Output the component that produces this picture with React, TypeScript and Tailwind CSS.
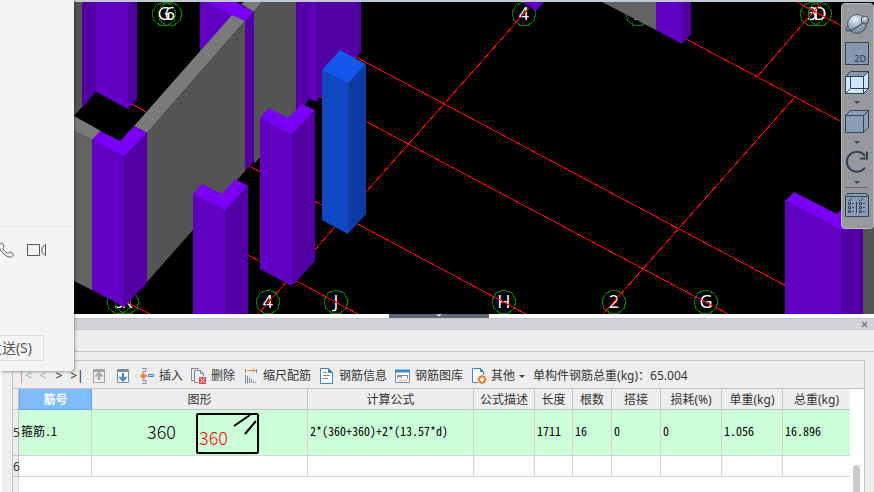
import type { ReactNode } from "react";

type Point = [number, number];

// [fill, points]
const BACK_FACES: [string, string][] = [
  ["#545454", "74,2 82,2 82,107 74,116"],
  ["#5200a3", "82,2 96,2 96,92 82,108"],
  ["#6100c2", "96,2 128,2 128,109 96,92"],
  ["#5200a3", "128,2 137,2 137,99 128,109"],
  ["#6100c2", "200,2 212,2 234,14 200,51"],
  ["#7a7a7a", "244,2 262,2 254,12 241,4"],
  ["#545454", "254,12 262,2 296,2 296,118 254,164"],
  ["#7a00f5", "208,2 236,2 254,12 245,22"],
  ["#5200a3", "245,21 254,12 254,161 245,171"],
  ["#7a7a7a", "134,126 232,15 245,21 147,133"],
  ["#545454", "147,133 245,21 245,171 147,282"],
  ["#5200a3", "296,2 310,2 310,99 296,115"],
  ["#6100c2", "310,2 317,2 317,102 310,99"],
  ["#5200a3", "316,2 361,2 361,52 356,58 322,96 316,102"],
  ["#6100c2", "522,2 544,2 536,11"],
  ["#636363", "602,2 656,2 656,30"],
  ["#6100c2", "656,2 682,2 682,44 656,30"],
  ["#5200a3", "682,2 691,2 691,34 682,44"],
];

const FRONT_FACES: [string, string][] = [
  ["#7a7a7a", "74,116 101,131 92,140 74,131"],
  ["#636363", "74,131 92,140 92,290 74,281"],
  ["#7a00f5", "92,140 100,131 120,141 134,126 147,133 124,157"],
  ["#6100c2", "92,140 124,157 124,307 92,290"],
  ["#5200a3", "124,157 147,133 147,283 124,307"],
  ["#7a00f5", "193,194 202,184 222,194 235,179 248,186 225,211"],
  ["#6100c2", "193,194 225,211 225,314 193,314"],
  ["#5200a3", "225,211 248,186 248,314 225,314"],
  ["#7a00f5", "260,118 269,108 288,118 302,104 315,110 292,135"],
  ["#6100c2", "260,118 292,135 292,286 260,269"],
  ["#5200a3", "292,135 315,110 315,261 292,286"],
  ["#1458eb", "322,70 340,50 366,64 348,84"],
  ["#1047c2", "322,70 348,84 348,234 322,220"],
  ["#0e3aa3", "348,84 366,64 366,214 348,234"],
  ["#7a00f5", "785,201 794,192 837,214 846,204 863,214 841,230"],
  ["#6100c2", "785,201 841,230 841,314 785,314"],
  ["#5200a3", "841,230 863,208 863,314 841,314"],
  ["#545454", "863,200 874,200 874,314 863,314"],
];

const AXES: [Point, Point][] = [
  [[132, 104], [146, 112]],
  [[249, 166], [526, 314]],
  [[248, 255], [358, 314]],
  [[128, 303], [150, 314]],
  [[320, 97], [728, 314]],
  [[356, 57], [790, 288]],
  [[686, 39], [874, 139]],
  [[797, 2], [874, 43]],
  [[529, 8], [258, 314]],
  [[821, 3], [757, 77]],
  [[795, 97], [603, 314]],
];

const MARKS: [string, number, number][] = [
  ["G", 164, 14],
  ["6", 170, 14],
  ["4", 524, 14],
  ["E", 638, 14],
  ["3", 812, 14],
  ["D", 820, 14],
  ["5", 119, 302],
  ["K", 127, 302],
  ["4", 268, 302],
  ["J", 336, 302],
  ["H", 504, 302],
  ["2", 614, 302],
  ["G", 706, 302],
];

function ring(cx: number, cy: number) {
  return Array.from({ length: 9 }, (_, i) => {
    const a = (i * 2 * Math.PI) / 9 - Math.PI / 2;
    return `${cx + 12 * Math.cos(a)},${cy + 12 * Math.sin(a)}`;
  }).join(" ");
}

function Scene() {
  return (
    <svg viewBox="0 2 874 312" preserveAspectRatio="xMinYMin slice" className="block h-full w-full bg-black">
      {MARKS.map(([label, x, y]) => (
        <g key={label + x}>
          <polygon points={ring(x, y)} fill="none" stroke="#008200" shapeRendering="crispEdges" />
          <text x={x} y={y + 6} textAnchor="middle" fontSize="18" fill="#fff" fontFamily="'Open Sans', sans-serif">
            {label}
          </text>
        </g>
      ))}
      {AXES.map(([a, b], i) => (
        <line key={i} x1={a[0]} y1={a[1]} x2={b[0]} y2={b[1]} stroke="#f00" shapeRendering="crispEdges" />
      ))}
      {[...BACK_FACES, ...FRONT_FACES].map(([fill, points]) => (
        <polygon key={points} points={points} fill={fill} />
      ))}
    </svg>
  );
}

function Caret() {
  return (
    <svg viewBox="0 0 6 6" className="h-1.5 w-1.5">
      <path d="M0 2h6L3 5z" fill="#3a4553" />
    </svg>
  );
}

function ViewButton({ label, children }: { label: string; children: ReactNode }) {
  return (
    <button aria-label={label} className="block h-6 w-6">
      <svg viewBox="0 0 24 24" fill="none" stroke="#344150" className="h-6 w-6">
        {children}
      </svg>
    </button>
  );
}

function ViewToolbar() {
  return (
    <div className="absolute top-px right-0 z-10 flex w-[33px] flex-col items-center gap-[5px] rounded-sm border border-[#b9babc] bg-[#97999d] pt-2 pr-0.5 pb-[11px]">
      <ViewButton label="动态观察">
        <defs>
          <radialGradient id="ball" cx="0.4" cy="0.25" r="0.8">
            <stop offset="0" stopColor="#eef4fa" />
            <stop offset="0.5" stopColor="#a3b3c6" />
            <stop offset="1" stopColor="#66788f" />
          </radialGradient>
        </defs>
        <circle cx="12" cy="12" r="9.5" fill="url(#ball)" stroke="#4a5869" />
        <path d="M1 17c1 3 4 2 8 0 5-3 9-6 11-8" stroke="#4a5869" strokeWidth="1.5" />
        <path d="M3 14c-3 3-2 5 0 5" stroke="#4a5869" />
        <circle cx="20" cy="8" r="3.8" fill="url(#ball)" stroke="#4a5869" />
      </ViewButton>
      <ViewButton label="二维">
        <rect x="0.5" y="1.5" width="23" height="22" fill="#8697b0" />
        <text x="21" y="21" textAnchor="end" fontSize="9" fill="#26313f" stroke="none" fontFamily="'Noto Sans', sans-serif">
          2D
        </text>
      </ViewButton>
      <ViewButton label="线框">
        <path d="M.5 6.500l5-5h18l-5 5z" fill="#8697ab" />
        <path d="M.5 6.500h18v17H.5z" fill="#cfe6ff" />
        <path d="M18.500 6.500l5-5v17l-5 5z" fill="#cfe6ff" />
        <path d="M5.500 6.500v12h13M.5 23.500l5-5M18.500 18.500h5" />
      </ViewButton>
      <Caret />
      <ViewButton label="实体">
        <path d="M.5 5.500l5-5h18l-5 5zM.5 5.500h18v17H.5zM18.500 5.500l5-5v17l-5 5z" fill="#8b9db6" />
      </ViewButton>
      <Caret />
      <ViewButton label="旋转">
        <path d="M20 17.500A10 10 0 1 1 20 6" strokeWidth="2" />
        <path d="M22 1.500v7h-7" strokeWidth="2" />
      </ViewButton>
      <div className="flex flex-col items-center gap-0.5">
        <Caret />
        <div className="h-px w-[23px] bg-[#65676b]" />
      </div>
      <ViewButton label="显示设置">
        <path d="M.5 3.500l2-3h19l2 3v20H.5z" fill="#8b9db6" />
        <path d="M.5 3.500h23M11.500 9v11" />
        <path d="M3 6.500l1.500 1.500L7 5M14 6.500l1.500 1.500L18 5" />
        <path d="M3.500 9.500h2v2h-2zM3.500 13.500h2v2h-2zM3.500 17.500h2v2h-2zM14.500 9.500h2v2h-2zM14.500 13.500h2v2h-2zM14.500 17.500h2v2h-2zM7 10.500h2M7 14.500h2M7 18.500h2M18 10.500h2M18 14.500h2M18 18.500h2" />
      </ViewButton>
    </div>
  );
}

function ChatWindow() {
  return (
    <aside className="absolute top-0 left-0 z-20 flex w-[74px] flex-col overflow-hidden rounded-br bg-[#f4f4f4] shadow-[1px_1px_3px_rgba(0,0,0,0.35)]">
      <div className="box-content h-[226px] border-b border-[#e6e6e6]" />
      <div className="flex h-[45px] items-center justify-end gap-3 pr-[27px]">
        <button aria-label="语音通话" className="shrink-0">
          <svg viewBox="0 0 18 18" fill="none" stroke="#555" className="h-[18px] w-[18px]">
            <path d="M4.500 2C2 3.500 1.500 5.500 3.500 9c2 3 5 6 8.500 7 2 .5 3.500-.5 4.500-2 .3-1-.3-1.500-3.500-2.800-1-.3-1.500 1-2.500 1C9 12 6 9 6 7.500 6 6.500 7.500 6.500 7 5.500 6 3 5.500 2 4.500 2z" />
          </svg>
        </button>
        <button aria-label="视频通话" className="shrink-0">
          <svg viewBox="0 0 20 14" fill="none" stroke="#555" className="h-3.5 w-5">
            <path d="M.5 1.500h12v11H.5zM18.500 1.500v11l-3.500-3V4.500z" />
          </svg>
        </button>
      </div>
      <div className="mt-[63px] flex justify-end pr-[30px] pb-2.5">
        <button className="h-[26px] shrink-0 border border-[#dedede] px-[11px] text-sm leading-6 whitespace-nowrap text-[#555]">
          发送(S)
        </button>
      </div>
    </aside>
  );
}

function Tool({ label, children }: { label: string; children: ReactNode }) {
  return (
    <button className="flex shrink-0 items-center gap-1">
      <svg viewBox="0 0 16 16" fill="none" className="h-4 w-4">
        {children}
      </svg>
      {label}
    </button>
  );
}

function RebarToolbar() {
  return (
    <div className="flex h-7 items-center gap-2 border-b border-[#c3c3ca] pt-0.5 pl-0.5 whitespace-nowrap">
      <div className="flex items-center font-['Noto_Sans'] text-[#222]">
        <button aria-label="首条" className="w-5 text-[#aaa]">
          <span className="text-[#d08a9a]">|</span>&lt;
        </button>
        <button aria-label="上一条" className="w-4 text-[#aaa]">&lt;</button>
        <button aria-label="下一条" className="w-4">&gt;</button>
        <button aria-label="末条" className="w-5">&gt;|</button>
      </div>
      <button aria-label="上移" className="-ml-1">
        <svg viewBox="0 0 16 16" fill="none" className="h-4 w-4">
          <path d="M2.500 1.500h11v13h-11z" stroke="#a5a5a5" />
          <path d="M2 3h12" stroke="#a5a5a5" strokeWidth="2" />
          <path d="M8 12V6M4.500 8.500L8 5l3.500 3.500" stroke="#a5a5a5" strokeWidth="2" />
        </svg>
      </button>
      <button aria-label="下移">
        <svg viewBox="0 0 16 16" fill="none" className="h-4 w-4">
          <path d="M2.500 1.500h11v13h-11z" stroke="#7b8a99" fill="#fff" />
          <path d="M2 3h12" stroke="#7b8a99" strokeWidth="2" />
          <path d="M8 5v7M4.500 9L8 12.500 11.500 9" stroke="#3f83d6" strokeWidth="2" />
        </svg>
      </button>
      <Tool label="插入">
        <path d="M3 .5h4v3H3M3 15.500h4v-3H3" stroke="#8a939c" />
        <path d="M8 8H3M5.500 5L2.500 8l3 3" stroke="#f07c28" strokeWidth="2" />
        <path d="M9.500 6.500h5v2h-5z" stroke="#3f83d6" fill="#cfe2f8" />
      </Tool>
      <Tool label="删除">
        <path d="M3 12.500H.5V.5H8M7 14.500H3.500v-12h6l3 3V8" stroke="#7b8a99" />
        <path d="M9.500 2.500v3h3" stroke="#7b8a99" />
        <path d="M8 9h7v7H8z" fill="#d9534f" />
        <path d="M9.500 10.500l4 4M13.500 10.500l-4 4" stroke="#fff" />
      </Tool>
      <Tool label="缩尺配筋">
        <path d="M4 2.500h8M10 .5l2 2-2 2" stroke="#f07c28" />
        <path d="M2.500 1v4M13.500 1v4" stroke="#7b8a99" />
        <path d="M2.500 7v8M4.500 8v7M6.500 9.500V15M8.500 11v4M10.500 12.500V15M12.500 14v1" stroke="#7b8a99" />
      </Tool>
      <Tool label="钢筋信息">
        <path d="M1.500.5h8l4 4v11h-12z" fill="#fff" stroke="#3f83d6" />
        <path d="M9 0v5h5z" fill="#3f83d6" />
        <path d="M4 4.500h4M4 7.500h7M4 10.500h5" stroke="#7b8a99" />
      </Tool>
      <Tool label="钢筋图库">
        <path d="M.5 2.500h14v12H.5z" stroke="#7b8a99" fill="#fff" />
        <path d="M0 3h15" stroke="#3f83d6" strokeWidth="3" />
        <path d="M2.500 10.500v-3h10v3M2.500 8.500h4v2" stroke="#7b8a99" />
        <path d="M4 12.500h9" stroke="#e09a68" strokeDasharray="2 1" />
      </Tool>
      <button className="flex shrink-0 items-center gap-1">
        <svg viewBox="0 0 16 16" fill="none" className="h-4 w-4">
          <path d="M7 14.500H1.500V.5h8l3 3V7" fill="#fff" stroke="#3f83d6" />
          <path d="M9 0v4h4z" fill="#3f83d6" />
          <circle cx="11" cy="11.500" r="3" stroke="#f07c28" strokeWidth="2" fill="#fff" />
          <path d="M11 7v2M11 14v2M6.500 11.500h2M13.500 11.500h2M8 8.500l1.500 1.500M12.500 13l1.500 1.500M14 8.500L12.500 10M9.500 13L8 14.500" stroke="#f07c28" strokeWidth="1.500" />
        </svg>
        其他
        <Caret />
      </button>
      <span>单构件钢筋总重(kg)：65.004</span>
    </div>
  );
}

const HEADERS = ["图形", "计算公式", "公式描述", "长度", "根数", "搭接", "损耗(%)", "单重(kg)", "总重(kg)"];
const VALUES = ["2*(360+360)+2*(13.57*d)", "", "1711", "16", "0", "0", "1.056", "16.896"];

function RebarTable() {
  return (
    <table className="w-full table-fixed border-separate border-spacing-0">
      <colgroup>
        <col className="w-1.5" />
        <col className="w-[73px]" />
        <col className="w-[216px]" />
        <col />
        <col className="w-[61px]" />
        <col className="w-[38px]" />
        <col className="w-[39px]" />
        <col className="w-[49px]" />
        <col className="w-[61px]" />
        <col className="w-[61px]" />
        <col className="w-[67px]" />
      </colgroup>
      <thead>
        <tr className="h-[21px] bg-[#eee]">
          <th className="border-r border-b border-[#c3c3ca] p-0" />
          <th className="border border-t-0 border-[#68a5e6] bg-[#80bbfd] p-0 pt-0.5 leading-[18px] font-bold text-white">
            筋号
          </th>
          {HEADERS.map((h) => (
            <th
              key={h}
              className="border-r border-b border-[#c3c3ca] p-0 pt-0.5 leading-[18px] font-normal last:border-r-0"
            >
              {h}
            </th>
          ))}
        </tr>
      </thead>
      <tbody>
        <tr className="h-[46px] bg-[#ccffd9] font-['Noto_Sans_Mono_CJK_SC','Liberation_Mono',monospace] text-black">
          <th className="border-r border-b border-[#c3c3ca] bg-[#eee] p-0 text-left font-['Noto_Sans'] font-normal text-[#333]">5</th>
          <td className="border-r border-b border-[#d2d2d2] p-0 pb-1 pl-0.5">箍筋.1</td>
          <td className="border-r border-b border-[#d2d2d2] p-0">
            <svg viewBox="0 0 215 45" className="mx-auto block h-[45px] w-[215px]" fontFamily="'Noto Sans CJK SC', sans-serif" fontSize="18" fontWeight="300">
              <text x="55" y="29" fill="#000">360</text>
              <rect x="105" y="4" width="61" height="39" rx="1" fill="none" stroke="#000" strokeWidth="2" />
              <text x="107" y="35" fill="#f00">360</text>
              <path d="M142 16l16-11M153 24l11-13" stroke="#000" strokeWidth="2" />
            </svg>
          </td>
          {VALUES.map((v, i) => (
            <td key={i} className="border-r border-b border-[#d2d2d2] p-0 pb-1 pl-0.5 last:border-r-0">
              {v}
            </td>
          ))}
        </tr>
        <tr className="h-[21px] bg-white">
          <th className="border-r border-b border-[#c3c3ca] bg-[#eee] p-0 pt-0.5 text-left font-['Noto_Sans'] leading-[18px] font-normal">6</th>
          <td className="border-r border-b border-[#d2d2d2] p-0" />
          {HEADERS.map((h) => (
            <td key={h} className="border-r border-b border-[#d2d2d2] p-0 last:border-r-0" />
          ))}
        </tr>
      </tbody>
    </table>
  );
}

export default function App() {
  return (
    <div className="relative flex h-screen flex-col overflow-hidden bg-[#eee] font-['Noto_Sans','Noto_Sans_CJK_SC',sans-serif] text-xs text-[#333]">
      <ChatWindow />

      <main className="relative h-[314px] shrink-0 border-t-2 border-[#c3cbd2]">
        <Scene />
        <ViewToolbar />
      </main>

      <div className="flex h-1 shrink-0 justify-center bg-white pl-1">
        <div className="flex w-[100px] justify-center bg-[#5f6876]">
          <svg viewBox="0 0 6 4" className="h-1 w-1.5">
            <path d="M0 0h6L3 3z" fill="#c3c8ce" />
          </svg>
        </div>
      </div>

      <section className="flex min-h-0 flex-1 flex-col">
        <div className="flex h-3 shrink-0 items-center justify-end border-y border-[#c3c4ca] bg-[#d3d4d9] pr-1.5">
          <button aria-label="关闭">
            <svg viewBox="0 0 7 7" className="h-[7px] w-[7px]">
              <path d="M1 1l5 5M6 1L1 6" stroke="#777" strokeWidth="1.500" />
            </svg>
          </button>
        </div>
        <div className="h-[22px] shrink-0 border-b border-[#c6c6ca]" />
        <div className="flex min-h-0 flex-1 border-l-2 border-white pt-2 pr-[9px] pl-2.5">
          <div className="flex min-w-0 flex-1 flex-col border border-b-0 border-[#c3c3ca]">
            <RebarToolbar />
            <div className="flex min-h-0 flex-1 bg-white">
              <div className="flex min-w-0 flex-1 flex-col">
                <RebarTable />
                <div className="w-1.5 flex-1 border-r border-[#ddd] bg-[#eee]" />
              </div>
              <div className="w-3.5 pt-[76px] pr-1 pl-[3px]">
                <div className="h-full rounded-t-full bg-[#cbcbcb]" />
              </div>
            </div>
          </div>
        </div>
      </section>
    </div>
  );
}
